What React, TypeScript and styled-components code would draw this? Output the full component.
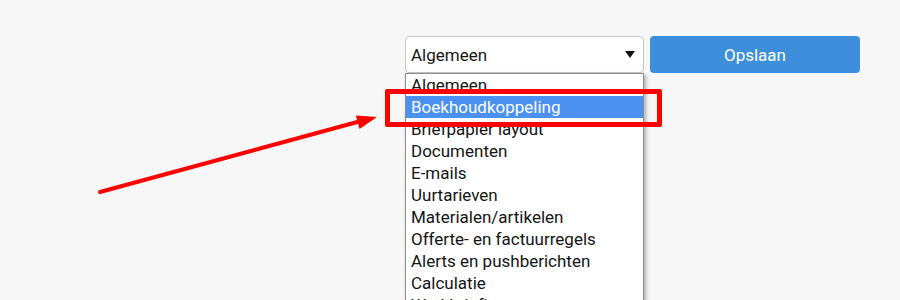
import styled, { createGlobalStyle } from 'styled-components'

const GlobalStyle = createGlobalStyle`
  body {
    margin: 0;
    background: #f7f7f7;
    font-family: Roboto, "Liberation Sans", sans-serif;
  }
`

const Page = styled.div`
  position: relative;
  width: 900px;
  height: 300px;
  overflow: hidden;
  background: #f7f7f7;
`

const Toolbar = styled.div`
  display: flex;
  justify-content: flex-end;
  gap: 6px;
  padding: 36px 40px 0 0;
`

const SelectWrap = styled.div`
  position: relative;
  width: 239px;
`

const SelectBox = styled.div`
  box-sizing: border-box;
  height: 37px;
  display: flex;
  align-items: center;
  justify-content: space-between;
  padding: 0 8px 0 5px;
  background: #fff;
  border: 1px solid #c6c6c6;
  border-radius: 4px;
  font-size: 17px;
  color: #161616;
`

const Caret = styled.span`
  width: 0;
  height: 0;
  border-left: 5px solid transparent;
  border-right: 5px solid transparent;
  border-top: 7px solid #111;
`

const SaveButton = styled.button`
  box-sizing: border-box;
  width: 210px;
  height: 37px;
  border: none;
  border-radius: 4px;
  background: #3d8fdb;
  color: #fff;
  font-family: inherit;
  font-size: 17px;
`

const OptionList = styled.ul`
  position: absolute;
  top: 37px;
  left: 0;
  box-sizing: border-box;
  width: 100%;
  margin: 0;
  padding: 0;
  list-style: none;
  background: #fff;
  border: 1px solid #8c8c8c;
  box-shadow: 2px 2px 4px rgba(0, 0, 0, 0.3);
`

const Option = styled.li<{ $active?: boolean }>`
  height: 22px;
  line-height: 22px;
  padding: 0 5px;
  font-size: 17px;
  white-space: nowrap;
  color: ${p => (p.$active ? '#fff' : '#141414')};
  background: ${p => (p.$active ? '#4a91f2' : 'transparent')};
`

const HighlightBox = styled.div`
  position: absolute;
  left: 385px;
  top: 89px;
  width: 277px;
  height: 38px;
  box-sizing: border-box;
  border: 5px solid #ff0000;
  border-radius: 2px;
`

const ArrowLayer = styled.svg`
  position: absolute;
  left: 0;
  top: 0;
  pointer-events: none;
`

const options = [
  'Algemeen',
  'Boekhoudkoppeling',
  'Briefpapier layout',
  'Documenten',
  'E-mails',
  'Uurtarieven',
  'Materialen/artikelen',
  'Offerte- en factuurregels',
  'Alerts en pushberichten',
  'Calculatie',
  'Werkbriefjes',
]

export default function App() {
  return (
    <Page>
      <GlobalStyle />
      <Toolbar>
        <SelectWrap>
          <SelectBox>
            Algemeen
            <Caret />
          </SelectBox>
          <OptionList>
            {options.map(o => (
              <Option key={o} $active={o === 'Boekhoudkoppeling'}>{o}</Option>
            ))}
          </OptionList>
        </SelectWrap>
        <SaveButton>Opslaan</SaveButton>
      </Toolbar>

      <HighlightBox />
      <ArrowLayer width="900" height="300" viewBox="0 0 900 300">
        <line x1="100" y1="192" x2="361" y2="121" stroke="#ff0000" strokeWidth="4" strokeLinecap="round" />
        <polygon points="377,117 359.5,129 355.9,115.4" fill="#ff0000" />
      </ArrowLayer>
    </Page>
  )
}
